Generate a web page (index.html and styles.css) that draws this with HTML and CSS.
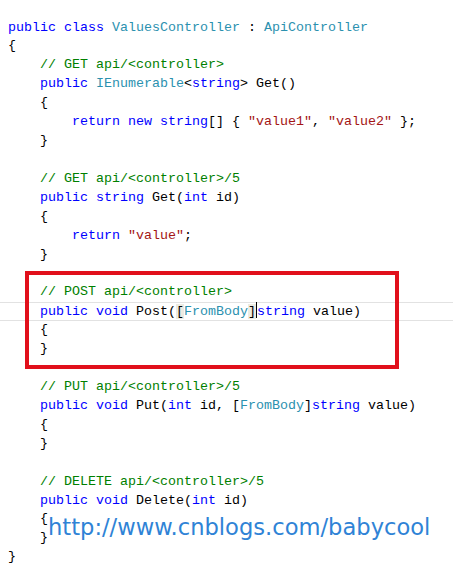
FILE: index.html
```html
<!DOCTYPE html>
<html lang="en">
<head>
    <meta charset="UTF-8">
    <meta name="viewport" content="width=device-width, initial-scale=1.0">
    <title>ValuesController</title>
    <link rel="stylesheet" href="styles.css">
</head>
<body>
    <div class="editor">
        <div class="code">
            <div class="line"><span class="kw">public</span> <span class="kw">class</span> <span class="type">ValuesController</span> : <span class="type">ApiController</span></div>
            <div class="line">{</div>
            <div class="line">    <span class="cm">// GET api/&lt;controller&gt;</span></div>
            <div class="line">    <span class="kw">public</span> <span class="type">IEnumerable</span>&lt;<span class="kw">string</span>&gt; Get()</div>
            <div class="line">    {</div>
            <div class="line">        <span class="kw">return</span> <span class="kw">new</span> <span class="kw">string</span>[] { <span class="str">"value1"</span>, <span class="str">"value2"</span> };</div>
            <div class="line">    }</div>
            <div class="line"></div>
            <div class="line">    <span class="cm">// GET api/&lt;controller&gt;/5</span></div>
            <div class="line">    <span class="kw">public</span> <span class="kw">string</span> Get(<span class="kw">int</span> id)</div>
            <div class="line">    {</div>
            <div class="line">        <span class="kw">return</span> <span class="str">"value"</span>;</div>
            <div class="line">    }</div>
            <div class="line"></div>

            <!-- highlighted block -->
            <div class="callout">
                <div class="line">    <span class="cm">// POST api/&lt;controller&gt;</span></div>
                <div class="line current">    <span class="kw">public</span> <span class="kw">void</span> Post(<span class="match">[</span><span class="type">FromBody</span><span class="match">]</span><span class="caret"></span><span class="kw">string</span> value)</div>
                <div class="line">    {</div>
                <div class="line">    }</div>
            </div>

            <div class="line"></div>
            <div class="line">    <span class="cm">// PUT api/&lt;controller&gt;/5</span></div>
            <div class="line">    <span class="kw">public</span> <span class="kw">void</span> Put(<span class="kw">int</span> id, [<span class="type">FromBody</span>]<span class="kw">string</span> value)</div>
            <div class="line">    {</div>
            <div class="line">    }</div>
            <div class="line"></div>
            <div class="line">    <span class="cm">// DELETE api/&lt;controller&gt;/5</span></div>
            <div class="line">    <span class="kw">public</span> <span class="kw">void</span> Delete(<span class="kw">int</span> id)</div>
            <div class="line">    {</div>
            <div class="line">    }</div>
            <div class="line">}</div>
        </div>
        <div class="watermark">http://www.cnblogs.com/babycool</div>
    </div>
</body>
</html>
```

FILE: styles.css
```css
/* General styles */
body {
    margin: 0;
    padding: 0;
    background-color: #ffffff;
}

.editor {
    position: relative;
    width: 453px;
    height: 571px;
    overflow: hidden;
}

/* Code listing */
.code {
    padding: 18.5px 0 0 8px;
    font-family: "Liberation Mono", "DejaVu Sans Mono", monospace;
    font-size: 13.33px;
    color: #000000;
}

.line {
    height: 18.93px;
    line-height: 18.93px;
    white-space: pre;
}

.kw {
    color: #0000ff;
}

.type {
    color: #2b91af;
}

.cm {
    color: #008000;
}

.str {
    color: #a31515;
}

/* Current line + caret */
.current {
    margin-left: -8px;
    padding-left: 8px;
    box-shadow: inset 0 1px #e2e2e2, inset 0 -1px #e2e2e2;
}

.match {
    background-color: #ecebe2;
}

.caret {
    display: inline-block;
    width: 0;
    height: 16px;
    vertical-align: -3px;
    border-left: 1px solid #000000;
}

/* Red frame drawn over the POST block */
.callout {
    position: relative;
}

.callout::after {
    content: "";
    position: absolute;
    top: -12.5px;
    left: 17px;
    width: 366px;
    height: 90px;
    border: 4px solid #e1101b;
    pointer-events: none;
}

/* Blog watermark */
.watermark {
    position: absolute;
    left: 48px;
    top: 514px;
    font-family: "DejaVu Sans", Verdana, sans-serif;
    font-size: 22.6px;
    color: #2f83d6;
    text-shadow: 0 0 2px #ffffff, 0 0 2px #ffffff;
}
```
